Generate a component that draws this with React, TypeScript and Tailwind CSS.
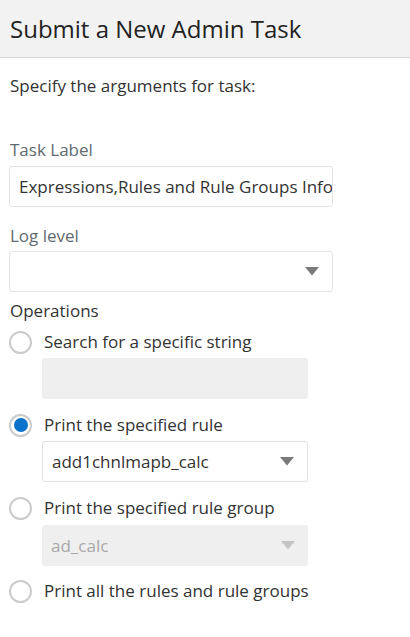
import { useState } from "react";

const font = { fontFamily: '"Open Sans", "Noto Sans", "Liberation Sans", sans-serif' };

function Caret({ disabled }: { disabled?: boolean }) {
  return (
    <svg width="14" height="9" viewBox="0 0 14 9" className="shrink-0">
      <path d="M0 0 H14 L7 8.5 Z" fill={disabled ? "#c4c4c4" : "#7a7a7a"} />
    </svg>
  );
}

function Radio({
  checked,
  label,
  onClick,
}: {
  checked: boolean;
  label: string;
  onClick: () => void;
}) {
  return (
    <button
      type="button"
      onClick={onClick}
      className="flex h-[24px] items-center text-left"
    >
      <span className="flex h-[23px] w-[23px] shrink-0 items-center justify-center rounded-full border-2 border-[#cbcbcb] bg-white">
        {checked && <span className="h-[14px] w-[14px] rounded-full bg-[#0a72c9]" />}
      </span>
      <span className="ml-[12px] text-[17px] leading-[24px] text-[#333333]">{label}</span>
    </button>
  );
}

export default function App() {
  const [op, setOp] = useState("rule");

  return (
    <div className="min-h-[637px] w-[410px] bg-white" style={font}>
      <header className="flex h-[58px] items-center border-b border-[#d4d4d4] bg-[#f2f2f2] px-[10px]">
        <h1 className="text-[24px] leading-[30px] text-[#222222]">Submit a New Admin Task</h1>
      </header>

      <main className="px-[9px]">
        <p className="mt-[16px] pl-[1px] text-[17px] leading-[24px] text-[#333333]">
          Specify the arguments for task:
        </p>

        <label className="mt-[40px] block pl-[1px] text-[17px] leading-[24px] text-[#5f6a70]">
          Task Label
        </label>
        <div className="mt-[4px] flex h-[41px] w-[324px] items-center overflow-hidden rounded-[3px] border border-[#e3e3e3] px-[9px]">
          <span className="whitespace-nowrap text-[17px] text-[#333333]">
            Expressions,Rules and Rule Groups Info
          </span>
        </div>

        <label className="mt-[17px] block pl-[1px] text-[17px] leading-[24px] text-[#5f6a70]">
          Log level
        </label>
        <div className="mt-[3px] flex h-[41px] w-[324px] items-center justify-end rounded-[3px] border border-[#e3e3e3] pr-[13px]">
          <Caret />
        </div>

        <p className="mt-[7px] pl-[1px] text-[17px] leading-[24px] text-[#333333]">Operations</p>

        <div className="mt-[7px]">
          <Radio
            checked={op === "search"}
            label="Search for a specific string"
            onClick={() => setOp("search")}
          />
          <div className="ml-[33px] mt-[4px] h-[41px] w-[266px] rounded-[3px] bg-[#efefef]" />
        </div>

        <div className="mt-[14px]">
          <Radio
            checked={op === "rule"}
            label="Print the specified rule"
            onClick={() => setOp("rule")}
          />
          <div className="ml-[33px] mt-[4px] flex h-[41px] w-[266px] items-center justify-between rounded-[3px] border border-[#e3e3e3] pl-[9px] pr-[13px]">
            <span className="text-[17px] text-[#333333]">add1chnlmapb_calc</span>
            <Caret />
          </div>
        </div>

        <div className="mt-[14px]">
          <Radio
            checked={op === "group"}
            label="Print the specified rule group"
            onClick={() => setOp("group")}
          />
          <div className="ml-[33px] mt-[5px] flex h-[41px] w-[266px] items-center justify-between rounded-[3px] bg-[#efefef] pl-[9px] pr-[13px]">
            <span className="text-[17px] text-[#a8a8a8]">ad_calc</span>
            <Caret disabled />
          </div>
        </div>

        <div className="mt-[13px]">
          <Radio
            checked={op === "all"}
            label="Print all the rules and rule groups"
            onClick={() => setOp("all")}
          />
        </div>
      </main>
    </div>
  );
}
